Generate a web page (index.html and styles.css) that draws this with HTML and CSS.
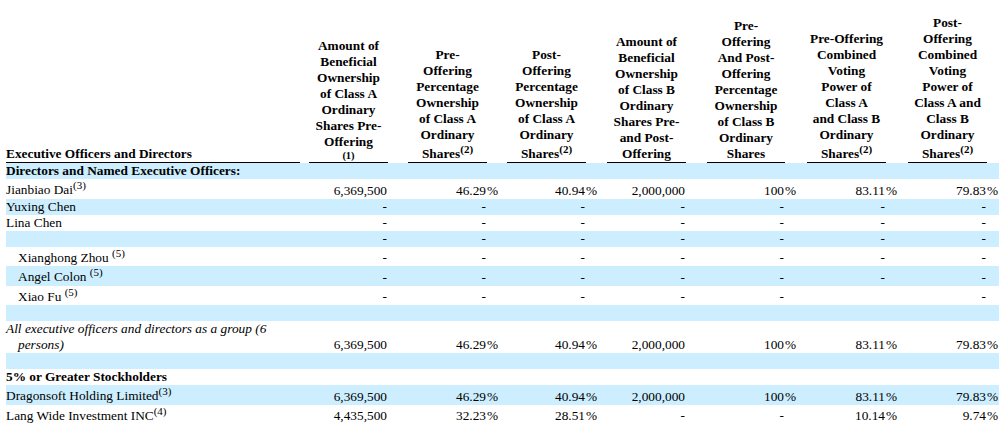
FILE: index.html
```html
<!DOCTYPE html>
<html>
<head>
<meta charset="utf-8">
<link rel="stylesheet" href="styles.css">
</head>
<body>
<table class="ownership">
  <colgroup>
    <col class="c-label">
    <col class="c-s9">
    <col class="c-v">
    <col class="c-s20">
    <col class="c-v">
    <col class="c-s20">
    <col class="c-v">
    <col class="c-s21">
    <col class="c-v">
    <col class="c-s21">
    <col class="c-v78">
    <col class="c-s22">
    <col class="c-v">
    <col class="c-s22">
    <col class="c-v">
    <col class="c-s12">
  </colgroup>
  <thead>
    <tr class="head">
      <th class="label u">Executive Officers and Directors</th>
      <th></th>
      <th class="u">Amount of<br>Beneficial<br>Ownership<br>of Class A<br>Ordinary<br>Shares Pre-<br>Offering<div class="fn">(1)</div></th>
      <th></th>
      <th class="u">Pre-<br>Offering<br>Percentage<br>Ownership<br>of Class A<br>Ordinary<br>Shares<sup>(2)</sup></th>
      <th></th>
      <th class="u">Post-<br>Offering<br>Percentage<br>Ownership<br>of Class A<br>Ordinary<br>Shares<sup>(2)</sup></th>
      <th></th>
      <th class="u">Amount of<br>Beneficial<br>Ownership<br>of Class B<br>Ordinary<br>Shares Pre-<br>and Post-<br>Offering</th>
      <th></th>
      <th class="u">Pre-<br>Offering<br>And Post-<br>Offering<br>Percentage<br>Ownership<br>of Class B<br>Ordinary<br>Shares</th>
      <th></th>
      <th class="u">Pre-Offering<br>Combined<br>Voting<br>Power of<br>Class A<br>and Class B<br>Ordinary<br>Shares<sup>(2)</sup></th>
      <th></th>
      <th class="u">Post-<br>Offering<br>Combined<br>Voting<br>Power of<br>Class A and<br>Class B<br>Ordinary<br>Shares<sup>(2)</sup></th>
      <th></th>
    </tr>
  </thead>
  <tbody>
    <tr class="blue">
      <td class="label bold">Directors and Named Executive Officers:</td>
      <td></td><td></td><td></td><td></td><td></td><td></td><td></td><td></td><td></td><td></td><td></td><td></td><td></td><td></td><td></td>
    </tr>
    <tr>
      <td class="label">Jianbiao Dai<sup>(3)</sup></td>
      <td></td>
      <td class="v">6,369,500</td><td class="p"></td>
      <td class="v">46.29</td><td class="p">%</td>
      <td class="v">40.94</td><td class="p">%</td>
      <td class="v">2,000,000</td><td class="p"></td>
      <td class="v">100</td><td class="p">%</td>
      <td class="v">83.11</td><td class="p">%</td>
      <td class="v">79.83</td><td class="p">%</td>
    </tr>
    <tr class="blue">
      <td class="label">Yuxing Chen</td>
      <td></td>
      <td class="v">-</td><td class="p"></td>
      <td class="v">-</td><td class="p"></td>
      <td class="v">-</td><td class="p"></td>
      <td class="v">-</td><td class="p"></td>
      <td class="v">-</td><td class="p"></td>
      <td class="v">-</td><td class="p"></td>
      <td class="v">-</td><td class="p"></td>
    </tr>
    <tr>
      <td class="label">Lina Chen</td>
      <td></td>
      <td class="v">-</td><td class="p"></td>
      <td class="v">-</td><td class="p"></td>
      <td class="v">-</td><td class="p"></td>
      <td class="v">-</td><td class="p"></td>
      <td class="v">-</td><td class="p"></td>
      <td class="v">-</td><td class="p"></td>
      <td class="v">-</td><td class="p"></td>
    </tr>
    <tr class="blue">
      <td class="label"></td>
      <td></td>
      <td class="v">-</td><td class="p"></td>
      <td class="v">-</td><td class="p"></td>
      <td class="v">-</td><td class="p"></td>
      <td class="v">-</td><td class="p"></td>
      <td class="v">-</td><td class="p"></td>
      <td class="v">-</td><td class="p"></td>
      <td class="v">-</td><td class="p"></td>
    </tr>
    <tr>
      <td class="label indent">Xianghong Zhou <sup>(5)</sup></td>
      <td></td>
      <td class="v">-</td><td class="p"></td>
      <td class="v">-</td><td class="p"></td>
      <td class="v">-</td><td class="p"></td>
      <td class="v">-</td><td class="p"></td>
      <td class="v">-</td><td class="p"></td>
      <td class="v">-</td><td class="p"></td>
      <td class="v">-</td><td class="p"></td>
    </tr>
    <tr class="blue">
      <td class="label indent">Angel Colon <sup>(5)</sup></td>
      <td></td>
      <td class="v">-</td><td class="p"></td>
      <td class="v">-</td><td class="p"></td>
      <td class="v">-</td><td class="p"></td>
      <td class="v">-</td><td class="p"></td>
      <td class="v">-</td><td class="p"></td>
      <td class="v">-</td><td class="p"></td>
      <td class="v">-</td><td class="p"></td>
    </tr>
    <tr>
      <td class="label indent">Xiao Fu <sup>(5)</sup></td>
      <td></td>
      <td class="v">-</td><td class="p"></td>
      <td class="v">-</td><td class="p"></td>
      <td class="v">-</td><td class="p"></td>
      <td class="v">-</td><td class="p"></td>
      <td class="v">-</td><td class="p"></td>
      <td class="v"></td><td class="p"></td>
      <td class="v">-</td><td class="p"></td>
    </tr>
    <tr class="blue empty">
      <td class="label"></td>
      <td></td><td></td><td></td><td></td><td></td><td></td><td></td><td></td><td></td><td></td><td></td><td></td><td></td><td></td><td></td>
    </tr>
    <tr>
      <td class="label italic hang">All executive officers and directors as a group (6<br>persons)</td>
      <td></td>
      <td class="v">6,369,500</td><td class="p"></td>
      <td class="v">46.29</td><td class="p">%</td>
      <td class="v">40.94</td><td class="p">%</td>
      <td class="v">2,000,000</td><td class="p"></td>
      <td class="v">100</td><td class="p">%</td>
      <td class="v">83.11</td><td class="p">%</td>
      <td class="v">79.83</td><td class="p">%</td>
    </tr>
    <tr class="blue empty">
      <td class="label"></td>
      <td></td><td></td><td></td><td></td><td></td><td></td><td></td><td></td><td></td><td></td><td></td><td></td><td></td><td></td><td></td>
    </tr>
    <tr>
      <td class="label bold">5% or Greater Stockholders</td>
      <td></td><td></td><td></td><td></td><td></td><td></td><td></td><td></td><td></td><td></td><td></td><td></td><td></td><td></td><td></td>
    </tr>
    <tr class="blue">
      <td class="label">Dragonsoft Holding Limited<sup>(3)</sup></td>
      <td></td>
      <td class="v">6,369,500</td><td class="p"></td>
      <td class="v">46.29</td><td class="p">%</td>
      <td class="v">40.94</td><td class="p">%</td>
      <td class="v">2,000,000</td><td class="p"></td>
      <td class="v">100</td><td class="p">%</td>
      <td class="v">83.11</td><td class="p">%</td>
      <td class="v">79.83</td><td class="p">%</td>
    </tr>
    <tr>
      <td class="label">Lang Wide Investment INC<sup>(4)</sup></td>
      <td></td>
      <td class="v">4,435,500</td><td class="p"></td>
      <td class="v">32.23</td><td class="p">%</td>
      <td class="v">28.51</td><td class="p">%</td>
      <td class="v">-</td><td class="p"></td>
      <td class="v">-</td><td class="p"></td>
      <td class="v">10.14</td><td class="p">%</td>
      <td class="v">9.74</td><td class="p">%</td>
    </tr>
  </tbody>
</table>
</body>
</html>
```

FILE: styles.css
```css
html, body {
  margin: 0;
  padding: 0;
  background: #ffffff;
}

body {
  font-family: "Liberation Serif", "Times New Roman", serif;
  font-size: 13.33px;
  color: #000000;
}

.ownership {
  margin: 15px 0 0 6px;
  width: 993px;
  table-layout: fixed;
  border-collapse: collapse;
  border-spacing: 0;
}

.c-label { width: 294px; }
.c-s9 { width: 9px; }
.c-v { width: 79px; }
.c-v78 { width: 78px; }
.c-s20 { width: 20px; }
.c-s21 { width: 21px; }
.c-s22 { width: 22px; }
.c-s12 { width: 12px; }

.ownership th,
.ownership td {
  padding: 0;
  line-height: 16px;
  vertical-align: bottom;
}

.ownership th {
  font-weight: bold;
  text-align: center;
  white-space: nowrap;
}

.ownership th.label {
  text-align: left;
}

.ownership th.u {
  border-bottom: 1px solid #000000;
}

.fn {
  font-size: 10.5px;
  line-height: 12px;
}

sup {
  font-size: 11px;
  line-height: 12px;
}

.ownership tr.blue td {
  background: #cceeff;
}

.ownership tr.empty td {
  height: 16px;
}

.ownership td.label {
  text-align: left;
  white-space: nowrap;
}

.ownership td.bold {
  font-weight: bold;
}

.ownership td.italic {
  font-style: italic;
}

.ownership td.indent {
  padding-left: 12px;
}

.ownership td.hang {
  padding-left: 12px;
  text-indent: -12px;
}

.ownership td.v {
  text-align: right;
  padding-right: 1px;
  white-space: nowrap;
}

.ownership td.p {
  text-align: left;
  white-space: nowrap;
}
```
